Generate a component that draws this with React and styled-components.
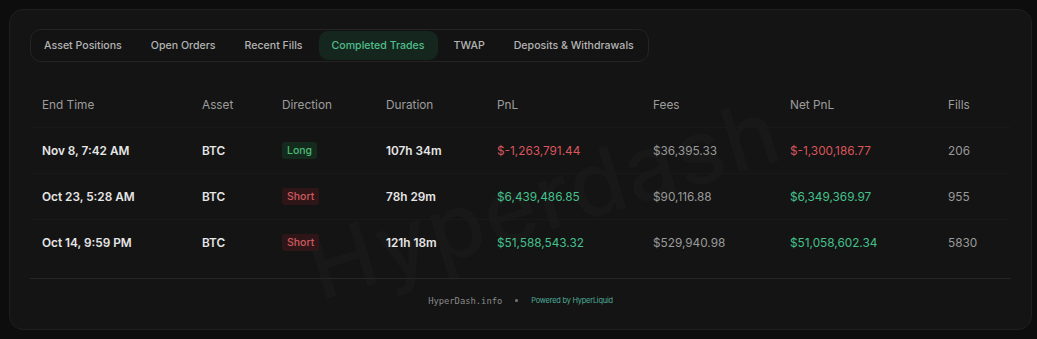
import React from 'react';
import styled, { createGlobalStyle } from 'styled-components';

const GlobalStyle = createGlobalStyle`
  html, body {
    margin: 0;
    padding: 0;
    background: #0d0d0d;
  }
  body {
    font-family: Inter, "Liberation Sans", sans-serif;
    -webkit-font-smoothing: antialiased;
  }
`;

const Page = styled.div`
  padding: 9px 5px 9px 9px;
  width: 1037px;
  height: 339px;
  box-sizing: border-box;
`;

const Card = styled.div`
  position: relative;
  overflow: hidden;
  background: #141414;
  border: 1px solid #1f1f1f;
  border-radius: 14px;
  padding: 19px 20px 0 20px;
  height: 321px;
  box-sizing: border-box;
`;

const Watermark = styled.div`
  position: absolute;
  left: 290px;
  top: 144px;
  font-size: 90px;
  font-weight: 500;
  letter-spacing: 2px;
  line-height: 1;
  color: #181818;
  transform: rotate(-17deg);
  pointer-events: none;
  user-select: none;
`;

const Tabs = styled.div`
  display: inline-flex;
  align-items: center;
  gap: 3px;
  padding: 1px 1px 1px 0;
  border: 1px solid #242424;
  border-radius: 11px;
  background: #131313;
`;

const Tab = styled.div`
  padding: 8px 13px;
  border-radius: 9px;
  font-size: 10.6px;
  line-height: 13px;
  font-weight: 500;
  color: ${(p) => (p.active ? '#4fbf8b' : '#b4b4b4')};
  background: ${(p) => (p.active ? '#15261e' : 'transparent')};
`;

const Table = styled.div`
  position: relative;
  margin-top: 19px;
  padding: 0 1px;
`;

const Row = styled.div`
  display: grid;
  grid-template-columns: 160px 80px 104px 111px 156px 137px 158px 1fr;
  align-items: center;
  height: 45px;
  padding-left: 11px;
  border-top: 1px solid ${(p) => (p.head ? 'transparent' : '#191919')};
`;

const Head = styled.div`
  font-size: 11.8px;
  color: #9d9d9d;
`;

const Cell = styled.div`
  font-size: 11.8px;
  font-weight: ${(p) => (p.bold ? 600 : 400)};
  color: ${(p) => p.color || '#9a9a9a'};
  white-space: nowrap;
`;

const Badge = styled.span`
  display: inline-block;
  padding: 2px 5px;
  border-radius: 3px;
  font-size: 10.5px;
  font-weight: 500;
  color: ${(p) => (p.short ? '#cf5a5f' : '#4cbb77')};
  background: ${(p) => (p.short ? '#2e1618' : '#142a1c')};
`;

const Footer = styled.div`
  position: relative;
  margin-top: 13px;
  border-top: 1px solid #262626;
  height: 43px;
  display: flex;
  align-items: center;
  justify-content: center;
  gap: 13px;
`;

const Site = styled.span`
  font-family: "DejaVu Sans Mono", "Liberation Mono", monospace;
  font-size: 8.8px;
  color: #8a8a8a;
`;

const Dot = styled.span`
  width: 3px;
  height: 3px;
  background: #777;
  border-radius: 50%;
`;

const Powered = styled.span`
  font-size: 7.4px;
  color: #4fae9a;
  letter-spacing: -0.2px;
`;

const RED = '#d9565c';
const GREEN = '#45c08c';

const tabs = [
  'Asset Positions',
  'Open Orders',
  'Recent Fills',
  'Completed Trades',
  'TWAP',
  'Deposits & Withdrawals',
];

const headers = ['End Time', 'Asset', 'Direction', 'Duration', 'PnL', 'Fees', 'Net PnL', 'Fills'];

const trades = [
  { end: 'Nov 8, 7:42 AM', dir: 'Long', dur: '107h 34m', pnl: '$-1,263,791.44', fees: '$36,395.33', net: '$-1,300,186.77', fills: '206' },
  { end: 'Oct 23, 5:28 AM', dir: 'Short', dur: '78h 29m', pnl: '$6,439,486.85', fees: '$90,116.88', net: '$6,349,369.97', fills: '955' },
  { end: 'Oct 14, 9:59 PM', dir: 'Short', dur: '121h 18m', pnl: '$51,588,543.32', fees: '$529,940.98', net: '$51,058,602.34', fills: '5830' },
];

const tone = (v) => (v.startsWith('$-') ? RED : GREEN);

export default function App() {
  return (
    <Page>
      <GlobalStyle />
      <Card>
        <Watermark>Hyperdash</Watermark>
        <Tabs>
          {tabs.map((t) => (
            <Tab key={t} active={t === 'Completed Trades'}>
              {t}
            </Tab>
          ))}
        </Tabs>
        <Table>
          <Row head>
            {headers.map((h) => (
              <Head key={h}>{h}</Head>
            ))}
          </Row>
          {trades.map((t) => (
            <Row key={t.end}>
              <Cell bold color="#e6e6e6">{t.end}</Cell>
              <Cell bold color="#e6e6e6">BTC</Cell>
              <Cell>
                <Badge short={t.dir === 'Short'}>{t.dir}</Badge>
              </Cell>
              <Cell bold color="#e6e6e6">{t.dur}</Cell>
              <Cell color={tone(t.pnl)}>{t.pnl}</Cell>
              <Cell>{t.fees}</Cell>
              <Cell color={tone(t.net)}>{t.net}</Cell>
              <Cell>{t.fills}</Cell>
            </Row>
          ))}
        </Table>
        <Footer>
          <Site>HyperDash.info</Site>
          <Dot />
          <Powered>Powered by HyperLiquid</Powered>
        </Footer>
      </Card>
    </Page>
  );
}
